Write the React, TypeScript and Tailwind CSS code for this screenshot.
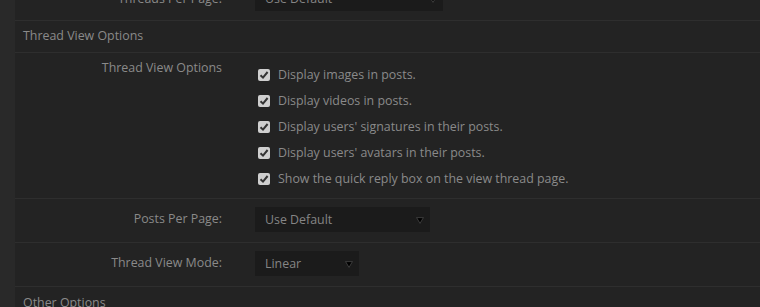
const font = { fontFamily: '"Open Sans", "Liberation Sans", sans-serif' };

const options = [
  "Display images in posts.",
  "Display videos in posts.",
  "Display users' signatures in their posts.",
  "Display users' avatars in their posts.",
  "Show the quick reply box on the view thread page.",
];

const Arrow = () => (
  <svg width="8" height="7" viewBox="0 0 8 7" className="shrink-0">
    <polygon points="0.6,0.6 7.4,0.6 4,6.4" fill="#000" stroke="#5a5a5a" strokeWidth="0.6" />
  </svg>
);

const Select = ({ value, width }: { value: string; width: string }) => (
  <div className={`flex h-[25px] items-center justify-between bg-[#1b1b1b] pl-[10px] pr-[6px] pt-[2px] text-[12.4px] text-[#858585] ${width}`}>
    <span>{value}</span>
    <Arrow />
  </div>
);

const Checkbox = () => (
  <span className="ml-[3px] flex h-[12px] w-[12px] shrink-0 items-center justify-center rounded-[2px] bg-[#cfcfcf]">
    <svg width="10" height="10" viewBox="0 0 10 10">
      <path d="M1.5 5.2 L4 7.6 L8.6 2" fill="none" stroke="#333" strokeWidth="2" />
    </svg>
  </span>
);

const Row = ({ label, children, className }: { label: string; children: React.ReactNode; className?: string }) => (
  <div className={`flex border-b border-[#2e2e2e] ${className ?? ""}`}>
    <div className="w-[207px] shrink-0 text-right text-[12.4px] text-[#8a8a8a]">{label}</div>
    <div className="pl-[33px]">{children}</div>
  </div>
);

export default function App() {
  return (
    <div className="flex h-[307px] w-[760px] overflow-hidden bg-[#232323]" style={font}>
      <div className="w-[15px] shrink-0 bg-[#292929]" />
      <div className="flex-1">
        <div className="-mt-[22px] flex h-[43px] items-end border-b border-[#2e2e2e] pb-[9px]">
          <div className="mb-[2px] w-[207px] shrink-0 text-right text-[12.4px] text-[#8a8a8a]">Threads Per Page:</div>
          <div className="pl-[33px]">
            <Select value="Use Default" width="w-[188px]" />
          </div>
        </div>

        <div className="flex h-[32px] items-center border-b border-[#2e2e2e] pl-[8px] text-[12.4px] text-[#8a8a8a]">
          Thread View Options
        </div>

        <Row label="Thread View Options" className="h-[146px] pt-[6px]">
          <div className="flex flex-col pt-[3px]">
            {options.map((o) => (
              <div key={o} className="flex h-[26px] items-center gap-[8px]">
                <Checkbox />
                <span className="text-[12.4px] text-[#8a8a8a]">{o}</span>
              </div>
            ))}
          </div>
        </Row>

        <div className="flex h-[44px] items-center border-b border-[#2e2e2e] pb-[2px]">
          <div className="w-[207px] shrink-0 text-right text-[12.4px] text-[#8a8a8a]">Posts Per Page:</div>
          <div className="pl-[33px]">
            <Select value="Use Default" width="w-[175px]" />
          </div>
        </div>

        <div className="flex h-[44px] items-center border-b border-[#2e2e2e] pb-[2px]">
          <div className="w-[207px] shrink-0 text-right text-[12.4px] text-[#8a8a8a]">Thread View Mode:</div>
          <div className="pl-[33px]">
            <Select value="Linear" width="w-[104px]" />
          </div>
        </div>

        <div className="flex h-[32px] items-center pl-[8px] text-[12.4px] text-[#8a8a8a]">Other Options</div>
      </div>
    </div>
  );
}
